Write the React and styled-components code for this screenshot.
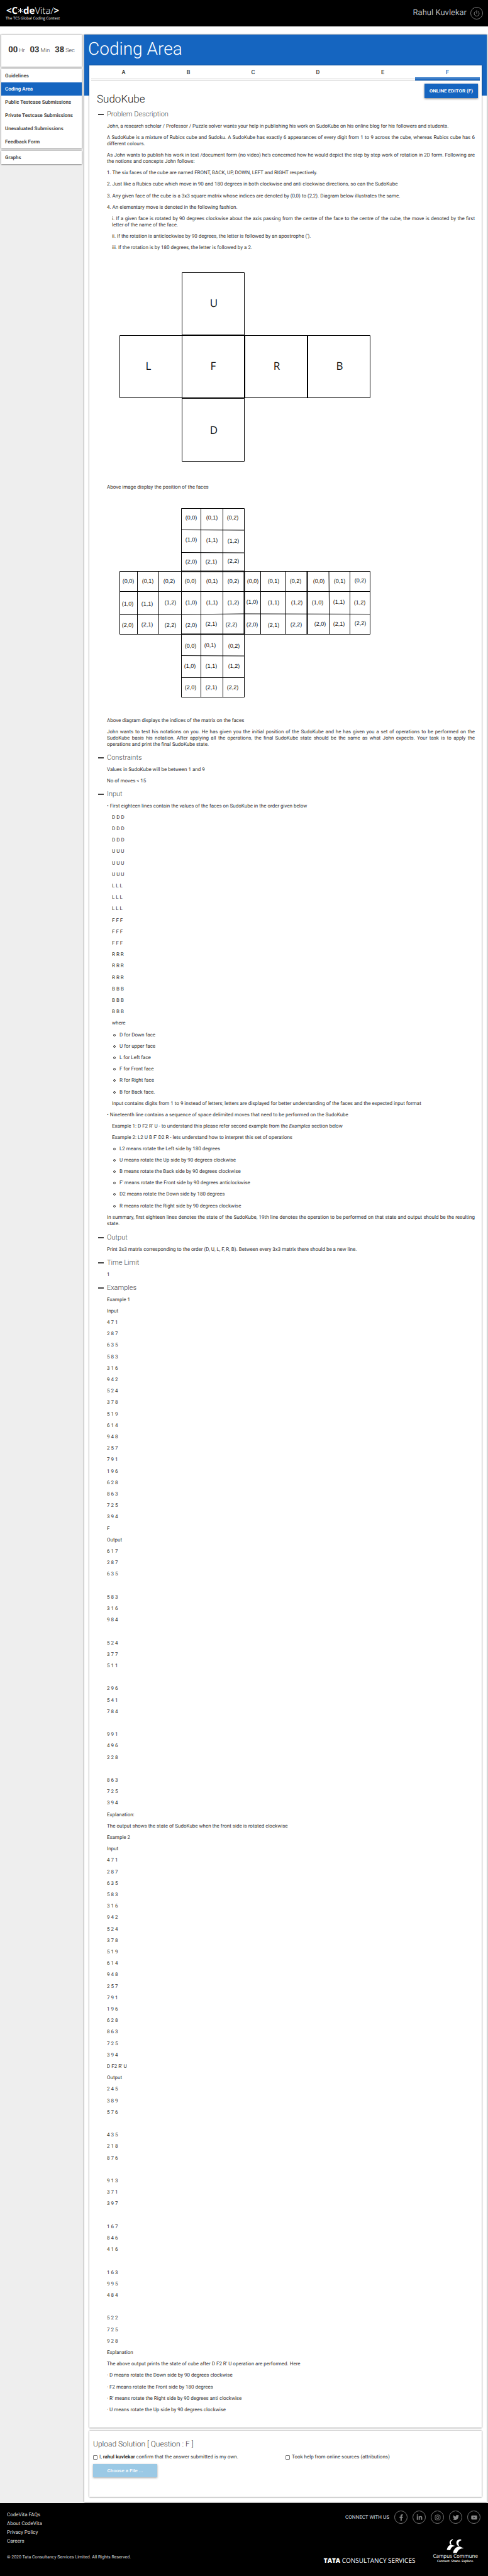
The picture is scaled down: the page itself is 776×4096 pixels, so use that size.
import React from 'react';
import styled, { createGlobalStyle, css } from 'styled-components';
import { FaFacebookF, FaLinkedinIn, FaInstagram, FaTwitter, FaYoutube } from 'react-icons/fa';

const blue = '#1565c0';
const raised = '0 0 2px rgba(0, 0, 0, 0.5), 0 1px 2px rgba(0, 0, 0, 0.25)';

const GlobalStyle = createGlobalStyle`
  *, *::before, *::after { box-sizing: border-box; }
  body {
    margin: 0;
    background: #fff;
    color: #333;
    font: 400 8px/10px Roboto, sans-serif;
    text-rendering: geometricPrecision;
  }
  h1, h2, h3, p, ul { margin: 0; padding: 0; font-weight: inherit; }
  a { color: inherit; text-decoration: none; }
  button { font-family: inherit; border: 0; padding: 0; background: none; color: inherit; cursor: pointer; }
`;

/* ---------- header ---------- */

const Header = styled.header`
  display: flex;
  align-items: center;
  justify-content: space-between;
  height: 42px;
  padding: 0 8px 0 9px;
  background: #000;
`;

const Brand = styled.a`
  display: flex;
  flex-direction: column;
  align-items: center;
  color: #fff;
  font-family: 'Open Sans', sans-serif;
`;

const BrandName = styled.span`
  display: flex;
  align-items: baseline;
  font-size: 15px;
  line-height: 17px;
  font-weight: 300;
  b { font-weight: 700; }
`;

const BrandTag = styled.span`
  font-size: 6px;
  line-height: 7px;
`;

const User = styled.div`
  display: flex;
  align-items: center;
  gap: 6px;
  color: #bbb;
  font-size: 13px;
  line-height: 20px;
`;

const PowerButton = styled.button`
  display: grid;
  place-items: center;
  width: 20px;
  height: 20px;
  border: 1px solid #777;
  border-radius: 50%;
  color: #888;
`;

/* ---------- page frame ---------- */

const Page = styled.div`
  display: grid;
  grid-template-columns: 128px minmax(0, 1fr);
  gap: 4px;
  margin-top: 12px;
  padding: 1px 2px 2px;
  background: #eee;
`;

const Sidebar = styled.aside`
  display: flex;
  flex-direction: column;
  gap: 4px;
`;

const Panel = styled.div`
  background: #fff;
  box-shadow: ${raised};
`;

const Timer = styled(Panel)`
  display: flex;
  align-items: center;
  justify-content: center;
  gap: 8px;
  height: 51px;
`;

const TimePart = styled.span`
  display: flex;
  align-items: baseline;
  gap: 2px;
  font-size: 9px;
  line-height: 16px;
  font-weight: 300;
  b { font-size: 13px; font-weight: 700; }
`;

const NavLink = styled.a`
  display: block;
  padding: 0 6px;
  font-weight: 600;
  line-height: 21px;
  color: ${p => (p.$active ? '#fff' : '#444')};
  background: ${p => (p.$active ? blue : 'transparent')};
`;

const Main = styled.main`
  padding: 0 8px 8px;
  background: linear-gradient(${blue} 97px, #fff 97px);
  box-shadow: ${raised};
`;

const PageTitle = styled.h1`
  height: 49px;
  margin-left: -2px;
  padding-top: 6px;
  color: #fff;
  font-size: 28px;
  line-height: 34px;
  font-weight: 300;
`;

const Card = styled.section`
  background: #fff;
  box-shadow: ${raised};
  & + & { margin-top: 5px; }
`;

/* ---------- question card ---------- */

const Tabs = styled.nav`
  display: grid;
  grid-template-columns: repeat(6, 1fr);
  margin: 0 3px;
  padding-top: 1px;
  border-bottom: 1px solid #ccc;
`;

const Tab = styled.button`
  height: 21px;
  color: ${p => (p.$active ? blue : '#333')};
  font-size: 9px;
  line-height: 18px;
  font-weight: 500;
  border-bottom: 1px solid ${p => (p.$active ? '#9bb6d6' : '#ccc')};
  box-shadow: ${p => (p.$active ? `inset 0 -2px ${blue}` : 'none')};
`;

const TabBase = styled.span`
  grid-column: ${p => p.$column};
  height: 2px;
  background: ${blue};
`;

const Toolbar = styled.div`
  display: flex;
  justify-content: flex-end;
  padding: 4px 6px 0;
`;

const EditorButton = styled.button`
  height: 23px;
  padding: 0 8px;
  background: ${blue};
  color: #fff;
  font-size: 8px;
  line-height: 23px;
  font-weight: 700;
  white-space: nowrap;
  box-shadow: 0 1px 3px rgba(0, 0, 0, 0.5);
`;

const Question = styled.div`
  padding: 0 11px 15px 12px;
  margin-top: -8px;
`;

const QuestionTitle = styled.h2`
  color: #222;
  font-size: 17px;
  line-height: 20px;
  font-weight: 300;
`;

const SectionHeading = styled.h3`
  padding: ${p => (p.$first ? '7px' : '1px')} 0 7px 2px;
`;

const SectionToggle = styled.button`
  display: flex;
  align-items: center;
  gap: 5px;
  font-size: 11px;
  line-height: 14px;
  font-weight: 300;
  color: #444;
  &::before {
    content: '';
    width: 9px;
    height: 2px;
    background: #444;
  }
`;

/* Lines keep an 18px rhythm, with one extra pixel of air after every fifth. */
const rhythm = css`
  margin-bottom: 8px;
  &:nth-of-type(5n) { margin-bottom: 9px; }
`;

const Body = styled.div`
  padding-left: 16px;
  text-align: justify;
`;

const Line = styled.p`
  min-height: 10px;
  padding-left: ${p => (p.$indent ? '8px' : '0')};
  ${rhythm}
`;

const Bullets = styled.ul`
  padding-left: 20px;
  list-style: none;
  li {
    position: relative;
    ${rhythm}
  }
  li::before {
    content: '';
    position: absolute;
    left: -10px;
    top: 3px;
    width: 4px;
    height: 4px;
    border: 1px solid #444;
    border-radius: 50%;
  }
`;

const Diagram = styled.svg`
  display: block;
  margin-bottom: 8px;
  path { fill: none; stroke: #000; }
  text { fill: #111; text-anchor: middle; font-family: ${p => p.$font}; font-size: ${p => p.$size}; }
`;

/* ---------- upload card ---------- */

const Upload = styled(Card)`
  padding: 13px 6px 31px;
`;

const UploadTitle = styled.h2`
  font-size: 12px;
  line-height: 16px;
  font-weight: 300;
  color: #333;
`;

const Confirmations = styled.div`
  display: grid;
  grid-template-columns: 1fr 1fr;
  margin: 7px 0 5px;
`;

const Check = styled.label`
  display: flex;
  align-items: center;
  gap: 3px;
  font-size: 8px;
  line-height: 12px;
  input {
    appearance: none;
    width: 7px;
    height: 7px;
    margin: 0;
    border: 1px solid #767676;
    border-radius: 1px;
    background: #fff;
  }
`;

const FileButton = styled.button`
  display: block;
  width: 102px;
  height: 21px;
  background: #9bc9e5;
  color: #fff;
  font-size: 8px;
  line-height: 21px;
  font-weight: 500;
  box-shadow: 0 1px 3px rgba(0, 0, 0, 0.35);
`;

/* ---------- footer ---------- */

const Footer = styled.footer`
  display: flex;
  justify-content: space-between;
  padding: 12px 12px 19px 11px;
  background: #000;
  color: #ddd;
`;

const FooterSide = styled.div`
  display: flex;
  flex-direction: column;
  justify-content: space-between;
  gap: ${p => (p.$end ? '24px' : '0')};
  align-items: ${p => (p.$end ? 'flex-end' : 'flex-start')};
`;

const FooterLinks = styled.nav`
  display: flex;
  flex-direction: column;
  font-size: 8px;
  line-height: 14px;
`;

const Copyright = styled.p`
  font-size: 7px;
  line-height: 10px;
  padding-bottom: 6px;
`;

const Social = styled.div`
  display: flex;
  align-items: center;
  gap: 8px;
  font-size: 8px;
`;

const SocialLink = styled.a`
  display: grid;
  place-items: center;
  width: 21px;
  height: 21px;
  border: 1px solid #777;
  border-radius: 50%;
  color: #888;
  font-size: 10px;
`;

const Partners = styled.div`
  display: flex;
  align-items: flex-end;
  gap: 28px;
  color: #fff;
  font-family: 'Open Sans', sans-serif;
`;

const Tata = styled.span`
  font-size: 10px;
  line-height: 12px;
  b { font-weight: 800; }
`;

const Campus = styled.span`
  display: flex;
  flex-direction: column;
  align-items: center;
  padding-right: 4px;
  font-size: 8px;
  line-height: 10px;
  small { font-size: 5px; line-height: 7px; font-weight: 600; }
`;

/* ---------- data ---------- */

const navItems = [
  'Guidelines',
  'Coding Area',
  'Public Testcase Submissions',
  'Private Testcase Submissions',
  'Unevaluated Submissions',
  'Feedback Form',
];

const tabs = ['A', 'B', 'C', 'D', 'E', 'F'];

const faceLetters = [
  ['U', 170, 81],
  ['L', 66, 181],
  ['F', 169, 181],
  ['R', 270, 181],
  ['B', 370, 181],
  ['D', 170, 283],
];

/* Centre of each cell label, row by row, for the six unfolded faces. */
const cellLabels = [
  [[134, 23], [167, 23], [200, 23], [134, 58], [167, 59], [201, 60], [134, 93], [166, 93], [201, 92]],
  [[34, 124], [65, 124], [99, 124], [33, 160], [64, 160], [101, 158], [33, 194], [64, 193], [101, 194]],
  [[133, 124], [167, 124], [201, 124], [134, 158], [167, 158], [201, 158], [134, 194], [166, 192], [198, 193]],
  [[232, 124], [265, 124], [300, 124], [231, 157], [265, 158], [302, 158], [231, 193], [265, 194], [301, 193]],
  [[337, 124], [370, 124], [403, 123], [335, 158], [369, 157], [402, 158], [339, 192], [369, 192], [403, 191]],
  [[133, 227], [164, 226], [202, 227], [132, 259], [166, 259], [202, 259], [133, 293], [166, 293], [200, 293]],
];

const startState = [
  '4 7 1', '2 8 7', '6 3 5', '5 8 3', '3 1 6', '9 4 2', '5 2 4', '3 7 8', '5 1 9',
  '6 1 4', '9 4 8', '2 5 7', '7 9 1', '1 9 6', '6 2 8', '8 6 3', '7 2 5', '3 9 4',
];

const examples = [
  'Example 1', 'Input', ...startState, 'F',
  'Output',
  '6 1 7', '2 8 7', '6 3 5', '',
  '5 8 3', '3 1 6', '9 8 4', '',
  '5 2 4', '3 7 7', '5 1 1', '',
  '2 9 6', '5 4 1', '7 8 4', '',
  '9 9 1', '4 9 6', '2 2 8', '',
  '8 6 3', '7 2 5', '3 9 4',
  'Explanation:',
  'The output shows the state of SudoKube when the front side is rotated clockwise',
  'Example 2', 'Input', ...startState, "D F2 R' U",
  'Output',
  '2 4 5', '3 8 9', '5 7 6', '',
  '4 3 5', '2 1 8', '8 7 6', '',
  '9 1 3', '3 7 1', '3 9 7', '',
  '1 6 7', '8 4 6', '4 1 6', '',
  '1 6 3', '9 9 5', '4 8 4', '',
  '5 2 2', '7 2 5', '9 2 8',
  'Explanation',
  "The above output prints the state of cube after D F2 R' U operation are performed. Here",
  '· D means rotate the Down side by 90 degrees clockwise',
  '· F2 means rotate the Front side by 180 degrees',
  "· R' means rotate the Right side by 90 degrees anti clockwise",
  '· U means rotate the Up side by 90 degrees clockwise',
];

const faceOrder = ['D', 'U', 'L', 'F', 'R', 'B'];

const socials = [
  ['Facebook', FaFacebookF],
  ['LinkedIn', FaLinkedinIn],
  ['Instagram', FaInstagram],
  ['Twitter', FaTwitter],
  ['YouTube', FaYoutube],
];

/* ---------- parts ---------- */

function FacesDiagram() {
  return (
    <Diagram width="430" height="354" viewBox="0 1 430 354" $font="'Open Sans', sans-serif" $size="17px">
      <path d="M119.500 26.500h99v99h-99z M20.500 126.500h398v99h-398z M119.500 126v100 M119.500 226.500h99v100h-99z" />
      <path d="M119 126h100 M219 126v100 M319 126v100 M119 226h100" strokeWidth="2" />
      {faceLetters.map(([letter, x, y]) => (
        <text key={letter} x={x} y={y}>{letter}</text>
      ))}
    </Diagram>
  );
}

function IndicesDiagram() {
  return (
    <Diagram width="430" height="345" viewBox="0 -12 430 345" $font="'Liberation Sans', Arial, sans-serif" $size="9px">
      <path d="M118.500 8.500h100v100h-100z M118.500 42.500l100 .5 M118.500 78.500l100 .5 M149.500 8v300 M184.500 8v300" />
      <path d="M20.500 108.500h398v100h-398z M20.500 140.500h398 M20.500 177.500l98 -.5 100 -1 200 .5 M48.500 108v100 M82.500 108l-.5 100 M118.500 108v100 M218.500 108v100 M244.500 108v100 M283.500 108v100 M353 108l1 100 M386.500 108v100" />
      <path d="M118.500 208.500h100v100h-100z M118.500 242.500l100 .5 M118.500 277.500h100" />
      <path d="M118 108.500h100 M118 208.500h100 M218.500 108v100 M318.500 108v100" strokeWidth="2" />
      {cellLabels.map((face, f) =>
        face.map(([x, y], i) => (
          <text key={`${f}-${i}`} x={x} y={y + 3}>{`(${Math.floor(i / 3)},${i % 3})`}</text>
        )),
      )}
    </Diagram>
  );
}

function Section({ title, first, children }) {
  return (
    <>
      <SectionHeading $first={first}>
        <SectionToggle type="button" aria-expanded="true">{title}</SectionToggle>
      </SectionHeading>
      <Body>{children}</Body>
    </>
  );
}

function CampusMark() {
  return (
    <svg width="28" height="23" viewBox="0 0 28 23" fill="#fff" aria-hidden="true">
      <path d="M10 0.500C5.500 1 3 6 6.500 9.500L8 8.500C6 6 7 3 10.500 1.500z" />
      <path d="M22 0.500C15.500 1 13.500 7 18.500 11.500L20 10.500C18 7 19 3.500 24 2z" />
      <path d="M0.500 17.500C1.500 12.500 4 9.500 7.500 9.500L13.500 11C9 12 7 14 6 18z" />
      <path d="M10.500 22.500C11 17 14.500 12.500 21 12L27.500 15C21 15 18 18 16.500 22.500z" />
    </svg>
  );
}

export default function App() {
  return (
    <>
      <GlobalStyle />
      <Header>
        <Brand href="#" aria-label="CodeVita home">
          <BrandName>
            <b>&lt;C</b>
            <svg width="9" height="10" viewBox="0 0 9 10" stroke="#fff" fill="none" aria-hidden="true">
              <path d="M4.500 1v8 M1 3l7 4 M8 3l-7 4" />
            </svg>
            <b>de</b>Vita/<b>&gt;</b>
          </BrandName>
          <BrandTag>The TCS Global Coding Contest</BrandTag>
        </Brand>
        <User>
          Rahul Kuvlekar
          <PowerButton type="button" aria-label="Log out">
            <svg width="10" height="11" viewBox="0 0 10 11" fill="none" stroke="currentColor" strokeLinecap="round">
              <path d="M5 0.800v4.500 M2.700 2.300A4 4 0 1 0 7.300 2.300" />
            </svg>
          </PowerButton>
        </User>
      </Header>

      <Page>
        <Sidebar>
          <Timer>
            <TimePart><b>00</b>Hr</TimePart>
            <TimePart><b>03</b>Min</TimePart>
            <TimePart><b>38</b>Sec</TimePart>
          </Timer>
          <Panel as="nav">
            {navItems.map(item => (
              <NavLink key={item} href="#" $active={item === 'Coding Area'}>{item}</NavLink>
            ))}
          </Panel>
          <Panel as="nav">
            <NavLink href="#">Graphs</NavLink>
          </Panel>
        </Sidebar>

        <Main>
          <PageTitle>Coding Area</PageTitle>
          <Card>
            <Tabs>
              {tabs.map(tab => (
                <Tab key={tab} type="button" $active={tab === 'F'}>{tab}</Tab>
              ))}
              <TabBase $column={tabs.indexOf('F') + 1} />
            </Tabs>
            <Toolbar>
              <EditorButton type="button">ONLINE EDITOR (F)</EditorButton>
            </Toolbar>
            <Question>
              <QuestionTitle>SudoKube</QuestionTitle>

              <Section title="Problem Description" first>
                <Line>John, a research scholar / Professor / Puzzle solver wants your help in publishing his work on SudoKube on his online blog for his followers and students.</Line>
                <Line>A SudoKube is a mixture of Rubics cube and Sudoku. A SudoKube has exactly 6 appearances of every digit from 1 to 9 across the cube, whereas Rubics cube has 6 different colours.</Line>
                <Line>As John wants to publish his work in text /document form (no video) he's concerned how he would depict the step by step work of rotation in 2D form. Following are the notions and concepts John follows:</Line>
                <Line>1. The six faces of the cube are named FRONT, BACK, UP, DOWN, LEFT and RIGHT respectively.</Line>
                <Line>2. Just like a Rubics cube which move in 90 and 180 degrees in both clockwise and anti clockwise directions, so can the SudoKube</Line>
                <Line>3. Any given face of the cube is a 3x3 square matrix whose indices are denoted by (0,0) to (2,2). Diagram below illustrates the same.</Line>
                <Line>4. An elementary move is denoted in the following fashion.</Line>
                <Line $indent>i. If a given face is rotated by 90 degrees clockwise about the axis passing from the centre of the face to the centre of the cube, the move is denoted by the first letter of the name of the face.</Line>
                <Line $indent>ii. If the rotation is anticlockwise by 90 degrees, the letter is followed by an apostrophe (').</Line>
                <Line $indent>iii. If the rotation is by 180 degrees, the letter is followed by a 2.</Line>
                <FacesDiagram />
                <Line>Above image display the position of the faces</Line>
                <IndicesDiagram />
                <Line>Above diagram displays the indices of the matrix on the faces</Line>
                <Line>John wants to test his notations on you. He has given you the initial position of the SudoKube and he has given you a set of operations to be performed on the SudoKube basis his notation. After applying all the operations, the final SudoKube state should be the same as what John expects. Your task is to apply the operations and print the final SudoKube state.</Line>
              </Section>

              <Section title="Constraints">
                <Line>Values in SudoKube will be between 1 and 9</Line>
                <Line>No of moves &lt; 15</Line>
              </Section>

              <Section title="Input">
                <Line>• First eighteen lines contain the values of the faces on SudoKube in the order given below</Line>
                {faceOrder.flatMap(face =>
                  [0, 1, 2].map(row => (
                    <Line key={face + row} $indent>{`${face} ${face} ${face}`}</Line>
                  )),
                )}
                <Line $indent>where</Line>
                <Bullets>
                  <li>D for Down face</li>
                  <li>U for upper face</li>
                  <li>L for Left face</li>
                  <li>F for Front face</li>
                  <li>R for Right face</li>
                  <li>B for Back face.</li>
                </Bullets>
                <Line $indent>Input contains digits from 1 to 9 instead of letters; letters are displayed for better understanding of the faces and the expected input format</Line>
                <Line>• Nineteenth line contains a sequence of space delimited moves that need to be performed on the SudoKube</Line>
                <Line $indent>Example 1: D F2 R' U - to understand this please refer second example from the <i>Examples</i> section below</Line>
                <Line $indent>Example 2: L2 U B F' D2 R - lets understand how to interpret this set of operations</Line>
                <Bullets>
                  <li>L2 means rotate the Left side by 180 degrees</li>
                  <li>U means rotate the Up side by 90 degrees clockwise</li>
                  <li>B means rotate the Back side by 90 degrees clockwise</li>
                  <li>F' means rotate the Front side by 90 degrees anticlockwise</li>
                  <li>D2 means rotate the Down side by 180 degrees</li>
                  <li>R means rotate the Right side by 90 degrees clockwise</li>
                </Bullets>
                <Line>In summary, first eighteen lines denotes the state of the SudoKube, 19th line denotes the operation to be performed on that state and output should be the resulting state.</Line>
              </Section>

              <Section title="Output">
                <Line>Print 3x3 matrix corresponding to the order (D, U, L, F, R, B). Between every 3x3 matrix there should be a new line.</Line>
              </Section>

              <Section title="Time Limit">
                <Line>1</Line>
              </Section>

              <Section title="Examples">
                {examples.map((text, i) => (
                  <Line key={i}>{text}</Line>
                ))}
              </Section>
            </Question>
          </Card>

          <Upload>
            <UploadTitle>Upload Solution [ Question : F ]</UploadTitle>
            <Confirmations>
              <Check>
                <input type="checkbox" />
                <span>I, <b>rahul kuvlekar</b> confirm that the answer submitted is my own.</span>
              </Check>
              <Check>
                <input type="checkbox" />
                <span>Took help from online sources (attributions)</span>
              </Check>
            </Confirmations>
            <FileButton type="button">Choose a File ...</FileButton>
          </Upload>
        </Main>
      </Page>

      <Footer>
        <FooterSide>
          <FooterLinks>
            <a href="#">CodeVita FAQs</a>
            <a href="#">About CodeVita</a>
            <a href="#">Privacy Policy</a>
            <a href="#">Careers</a>
          </FooterLinks>
          <Copyright>© 2020 Tata Consultancy Services Limited. All Rights Reserved.</Copyright>
        </FooterSide>
        <FooterSide $end>
          <Social>
            CONNECT WITH US
            {socials.map(([name, Icon]) => (
              <SocialLink key={name} href="#" aria-label={name}><Icon /></SocialLink>
            ))}
          </Social>
          <Partners>
            <Tata><b>TATA</b> CONSULTANCY SERVICES</Tata>
            <Campus>
              <CampusMark />
              Campus Commune
              <small>Connect. Share. Explore.</small>
            </Campus>
          </Partners>
        </FooterSide>
      </Footer>
    </>
  );
}
